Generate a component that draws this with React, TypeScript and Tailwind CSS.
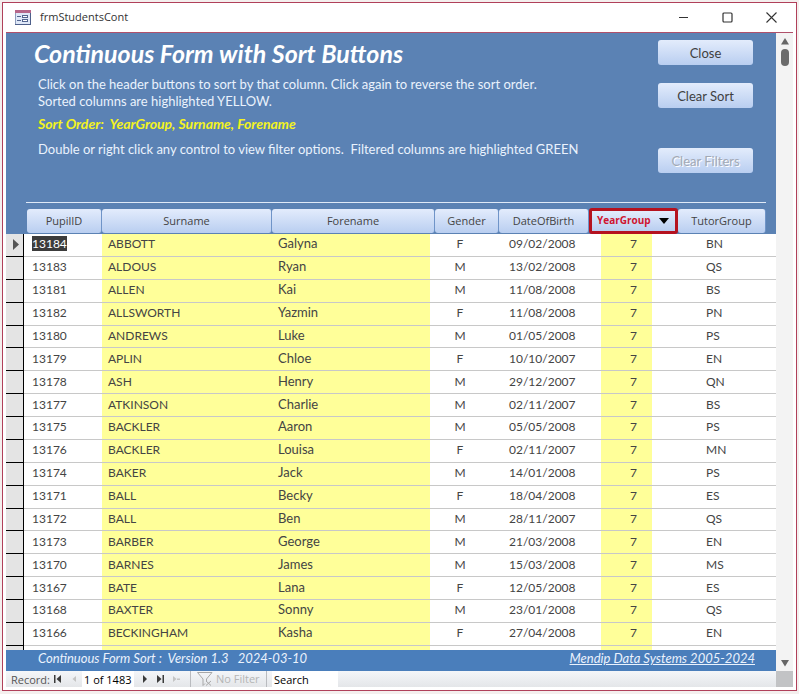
import { useState } from "react";

const students = [
  ["13184", "ABBOTT", "Galyna", "F", "09/02/2008", "7", "BN"],
  ["13183", "ALDOUS", "Ryan", "M", "13/02/2008", "7", "QS"],
  ["13181", "ALLEN", "Kai", "M", "11/08/2008", "7", "BS"],
  ["13182", "ALLSWORTH", "Yazmin", "F", "11/08/2008", "7", "PN"],
  ["13180", "ANDREWS", "Luke", "M", "01/05/2008", "7", "PS"],
  ["13179", "APLIN", "Chloe", "F", "10/10/2007", "7", "EN"],
  ["13178", "ASH", "Henry", "M", "29/12/2007", "7", "QN"],
  ["13177", "ATKINSON", "Charlie", "M", "02/11/2007", "7", "BS"],
  ["13175", "BACKLER", "Aaron", "M", "05/05/2008", "7", "PS"],
  ["13176", "BACKLER", "Louisa", "F", "02/11/2007", "7", "MN"],
  ["13174", "BAKER", "Jack", "M", "14/01/2008", "7", "PS"],
  ["13171", "BALL", "Becky", "F", "18/04/2008", "7", "ES"],
  ["13172", "BALL", "Ben", "M", "28/11/2007", "7", "QS"],
  ["13173", "BARBER", "George", "M", "21/03/2008", "7", "EN"],
  ["13170", "BARNES", "James", "M", "15/03/2008", "7", "MS"],
  ["13167", "BATE", "Lana", "F", "12/05/2008", "7", "ES"],
  ["13168", "BAXTER", "Sonny", "M", "23/01/2008", "7", "QS"],
  ["13166", "BECKINGHAM", "Kasha", "F", "27/04/2008", "7", "EN"],
];

const columns = ["PupilID", "Surname", "Forename", "Gender", "DateOfBirth", "YearGroup", "TutorGroup"];

// yellow strips are narrower than their columns
const cellStyles = [
  "pl-2",
  "pl-[6px] bg-[#ffff99]",
  "pl-[6px] text-[13px] bg-[linear-gradient(to_right,#ffff99_158px,transparent_158px)]",
  "pr-[14px] text-center",
  "pl-[10px]",
  "text-center bg-[linear-gradient(to_right,transparent_12px,#ffff99_12px,#ffff99_63px,transparent_63px)]",
  "pl-7",
];

const buttonFace = "bg-linear-to-b from-[#e3ecfc] to-[#b9cef0]";

function PanelButton({ label, disabled }: { label: string; disabled?: boolean }) {
  return (
    <button
      type="button"
      disabled={disabled}
      className={`block h-[25px] w-[95px] rounded-[3px] text-[13px] leading-[24px] text-[#3f3f3f] disabled:text-[#a3a9b5] disabled:[text-shadow:1px_1px_0_#ffffff] ${buttonFace}`}
    >
      {label}
    </button>
  );
}

function NavButton({ label, path, disabled }: { label: string; path: string; disabled?: boolean }) {
  return (
    <button
      type="button"
      aria-label={label}
      disabled={disabled}
      className="flex h-4 w-4 items-center justify-center text-[#3b3b3b] disabled:text-[#c4c4c4]"
    >
      <svg width="10" height="8" viewBox="0 0 10 8" fill="currentColor">
        <path d={path} />
      </svg>
    </button>
  );
}

function TitleBar() {
  return (
    <header className="flex h-[30px] items-center border-b border-[#b0506a] pl-[9px] pr-[14px]">
      <svg width="16" height="15" viewBox="0 0 16 15">
        <rect x="0.5" y="0.5" width="15" height="14" fill="#dfe8f8" stroke="#8d9cbc" />
        <rect x="0" y="0" width="16" height="3" fill="#b5668a" />
        <path d="M0 14.500h16M15.500 3v12" stroke="#4d5f8a" />
        <path d="M2 6.500h4M2 10.500h4" stroke="#53658f" />
        <rect x="7.5" y="5.500" width="5" height="2" fill="#fff" stroke="#53658f" />
        <rect x="7.5" y="9.500" width="5" height="2" fill="#fff" stroke="#53658f" />
      </svg>
      <h1 className="flex-1 pl-[9px] font-['Open_Sans',sans-serif] text-[11px] text-[#333]">frmStudentsCont</h1>
      <div className="flex gap-[28px]">
        <button type="button" aria-label="Minimise" className="flex h-4 w-4 items-center justify-center">
          <svg width="11" height="11" viewBox="0 0 11 11" stroke="#333">
            <path d="M1 5.500h9" />
          </svg>
        </button>
        <button type="button" aria-label="Maximise" className="flex h-4 w-4 items-center justify-center">
          <svg width="11" height="11" viewBox="0 0 11 11" fill="none" stroke="#333" strokeWidth="1.2">
            <rect x="1" y="1" width="9" height="9" rx="1" />
          </svg>
        </button>
        <button type="button" aria-label="Close window" className="flex h-4 w-4 items-center justify-center">
          <svg width="11" height="11" viewBox="0 0 11 11" stroke="#333" strokeWidth="1.1">
            <path d="M0.500 0.500l10 10M10.500 0.500l-10 10" />
          </svg>
        </button>
      </div>
    </header>
  );
}

function FormHeader() {
  return (
    <section className="bg-[#5b82b4] px-5 pt-[7px]">
      <div className="mr-[-10px] flex h-[163px] justify-between border-b border-[#dfe9f7] pl-3">
        <div className="text-[13px] leading-[17px] text-[#eaf2fd]">
          <h2 className="-ml-1 text-[25px] leading-[26px] font-bold text-white italic">
            Continuous Form with Sort Buttons
          </h2>
          <p className="pt-[10px]">
            Click on the header buttons to sort by that column. Click again to reverse the sort order.
            <br />
            Sorted columns are highlighted YELLOW.
          </p>
          <p className="pt-[5px] text-[14px] font-bold text-[#f3f321] italic">
            Sort Order:&nbsp; YearGroup, Surname, Forename
          </p>
          <p className="pt-[9px]">
            Double or right click any control to view filter options.&nbsp; Filtered columns are highlighted GREEN
          </p>
        </div>
        <div className="flex flex-col pr-[13px]">
          <PanelButton label="Close" />
          <div className="pt-[18px] pb-10">
            <PanelButton label="Clear Sort" />
          </div>
          <PanelButton label="Clear Filters" disabled />
        </div>
      </div>
    </section>
  );
}

function StudentTable() {
  return (
    <table className="h-[443px] w-full table-fixed border-separate border-spacing-0 text-[12px] leading-[17px] text-[#444]">
      <colgroup>
        <col className="w-[18px]" />
        <col className="w-[78px]" />
        <col className="w-[170px]" />
        <col className="w-[163px]" />
        <col className="w-[64px]" />
        <col className="w-[90px]" />
        <col className="w-[89px]" />
        <col />
      </colgroup>
      <thead className="bg-[#5b82b4]">
        <tr className="h-[31px]">
          <th className="p-0" />
          {columns.map((name, i) => (
            <th
              key={name}
              className={`p-0 pt-[5px] font-normal ${i === 0 ? "pl-[3px]" : ""} ${i === 6 ? "pr-[10px]" : ""}`}
            >
              {name === "YearGroup" ? (
                <button
                  type="button"
                  className={`flex h-[26px] w-full items-center rounded-[3px] border-[3px] border-[#b5121f] pl-[5px] pb-px font-['Open_Sans',sans-serif] text-[10px] font-bold text-[#cf1430] ${buttonFace}`}
                >
                  {name}
                  <svg className="ml-2 shrink-0" width="10" height="6" viewBox="0 0 10 6">
                    <path d="M0 0h10L5 6z" fill="#000" />
                  </svg>
                </button>
              ) : (
                <button
                  type="button"
                  className={`block h-6 w-full rounded-[3px] border-r border-[#6f94c8] pb-[2px] font-['Open_Sans',sans-serif] text-[11px] text-[#444] ${buttonFace}`}
                >
                  {name}
                </button>
              )}
            </th>
          ))}
        </tr>
      </thead>
      <tbody>
        {students.map((row, r) => (
          <tr key={row[0]}>
            <td className="border-r border-b border-black bg-[#e4e4e4] p-0 pl-[7px]">
              {r === 0 && (
                <svg className="block" width="6" height="11" viewBox="0 0 6 11">
                  <path d="M0 0l6 5.500L0 11z" fill="#555" />
                </svg>
              )}
            </td>
            {row.map((value, i) => (
              <td key={columns[i]} className={`border-b border-[#c8c8c8] p-0 pb-[2px] ${cellStyles[i]}`}>
                {r === 0 && i === 0 ? <mark className="bg-[#3c3c3c] text-white">{value}</mark> : value}
              </td>
            ))}
          </tr>
        ))}
      </tbody>
    </table>
  );
}

function FormFooter() {
  return (
    <footer className="flex h-[21px] justify-between bg-[#4a7ebb] pl-8 pr-[21px] text-[13px] leading-[17px] text-[#eaf2fd] italic">
      <p className="whitespace-pre">{"Continuous Form Sort :  Version 1.3   2024-03-10"}</p>
      <a href="#" className="underline">
        Mendip Data Systems 2005-2024
      </a>
    </footer>
  );
}

function ScrollBar() {
  return (
    <div className="flex w-[17px] flex-col items-center bg-[#f3f3f3] pt-[5px] pb-1">
      <button type="button" aria-label="Scroll up">
        <svg className="block" width="8" height="7" viewBox="0 0 8 7">
          <path d="M4 0l4 6.500H0z" fill="#666" />
        </svg>
      </button>
      <div className="mt-1 h-[17px] w-2 rounded-full bg-[#6b6b6b]" />
      <button type="button" aria-label="Scroll down" className="mt-auto">
        <svg className="block" width="8" height="7" viewBox="0 0 8 7">
          <path d="M4 6.500L8 0H0z" fill="#666" />
        </svg>
      </button>
    </div>
  );
}

function RecordBar() {
  const [record, setRecord] = useState("1 of 1483");
  const [search, setSearch] = useState("Search");

  return (
    <nav className="flex h-4 bg-linear-to-b from-[#f4f6f9] to-[#e4e6e9] font-['Open_Sans',sans-serif] text-[11px] leading-[18px] text-[#555]">
      <label htmlFor="record" className="w-[44px] pl-[5px]">
        Record:
      </label>
      <NavButton label="First record" path="M1 0h1.500v8H1zM8 0v8L3.500 4z" />
      <NavButton label="Previous record" path="M7 1v6L3.500 4z" disabled />
      <input
        id="record"
        value={record}
        onChange={(e) => setRecord(e.target.value)}
        className="h-4 w-[52px] bg-white pt-[2px] pl-[2px] text-black outline-none"
      />
      <div className="flex pl-[3px]">
        <NavButton label="Next record" path="M3 0v8l4-4z" />
        <NavButton label="Last record" path="M1 0v8l4.500-4zM6.500 0H8v8H6.500z" />
        <NavButton label="New record" path="M1 1v6l3.500-3zM5 3.500h3v1.500H5z" disabled />
      </div>
      <button
        type="button"
        disabled
        className="ml-[5px] flex w-[77px] items-center gap-[3px] border-x border-[#b9bbbf] pl-[6px] whitespace-nowrap text-[#b5b5b5]"
      >
        <svg className="shrink-0" width="16" height="14" viewBox="0 0 16 14" fill="none" stroke="#a8a8a8">
          <path d="M0.500 0.500h14.500L9.500 7v2M0.500 0.500L6 7v6.500l2-2M9 9l5 4.500M14 9l-5 4.500" />
        </svg>
        No Filter
      </button>
      <input
        aria-label="Search"
        value={search}
        onChange={(e) => setSearch(e.target.value)}
        className="ml-[5px] h-4 w-[66px] bg-white pt-[2px] pl-[2px] text-black outline-none"
      />
      <div className="ml-auto w-[17px] bg-[#c2c3c5]" />
    </nav>
  );
}

export default function App() {
  return (
    <div className="bg-[#f4efee] p-[2px] pb-[3px] font-[Lato,sans-serif]">
      <main className="border border-[#b0405a] bg-white px-[3px] pb-[3px]">
        <TitleBar />
        <div className="flex">
          <div className="min-w-0 flex-1">
            <FormHeader />
            <StudentTable />
            <div className="flex h-1">
              <div className="w-[18px] border-r border-black bg-[#e4e4e4]" />
              <div className="ml-[78px] w-[328px] bg-[#ffff99]" />
              <div className="ml-[171px] w-[51px] bg-[#ffff99]" />
            </div>
            <FormFooter />
          </div>
          <ScrollBar />
        </div>
        <RecordBar />
      </main>
    </div>
  );
}
